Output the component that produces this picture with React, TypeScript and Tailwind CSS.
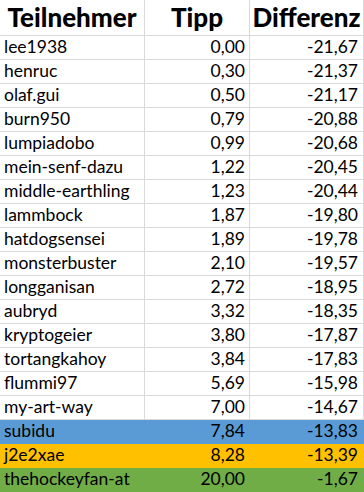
import React from "react";

type Row = { name: string; tipp: string; diff: string; bg?: string };

const rows: Row[] = [
  { name: "lee1938", tipp: "0,00", diff: "-21,67" },
  { name: "henruc", tipp: "0,30", diff: "-21,37" },
  { name: "olaf.gui", tipp: "0,50", diff: "-21,17" },
  { name: "burn950", tipp: "0,79", diff: "-20,88" },
  { name: "lumpiadobo", tipp: "0,99", diff: "-20,68" },
  { name: "mein-senf-dazu", tipp: "1,22", diff: "-20,45" },
  { name: "middle-earthling", tipp: "1,23", diff: "-20,44" },
  { name: "lammbock", tipp: "1,87", diff: "-19,80" },
  { name: "hatdogsensei", tipp: "1,89", diff: "-19,78" },
  { name: "monsterbuster", tipp: "2,10", diff: "-19,57" },
  { name: "longganisan", tipp: "2,72", diff: "-18,95" },
  { name: "aubryd", tipp: "3,32", diff: "-18,35" },
  { name: "kryptogeier", tipp: "3,80", diff: "-17,87" },
  { name: "tortangkahoy", tipp: "3,84", diff: "-17,83" },
  { name: "flummi97", tipp: "5,69", diff: "-15,98" },
  { name: "my-art-way", tipp: "7,00", diff: "-14,67" },
  { name: "subidu", tipp: "7,84", diff: "-13,83", bg: "blue" },
  { name: "j2e2xae", tipp: "8,28", diff: "-13,39", bg: "orange" },
  { name: "thehockeyfan-at", tipp: "20,00", diff: "-1,67", bg: "green" },
];

function cellClasses(bg?: string) {
  if (bg === "blue") return "bg-[#5b9bd5] border-[#5b9bd5]";
  if (bg === "orange") return "bg-[#ffc000] border-[#ffc000]";
  if (bg === "green") return "bg-[#70ad47] border-[#70ad47]";
  return "bg-white border-[#d9d9d9]";
}

export default function App() {
  return (
    <div
      className="w-[364px] h-[492px] bg-white overflow-hidden text-black"
      style={{ fontFamily: "Lato, 'Open Sans', sans-serif" }}
    >
      <div className="grid grid-cols-[145px_105px_114px]">
        <div className="h-[36px] border-r border-b border-[#d9d9d9] flex items-end justify-center pb-[5px] font-black text-[26px] leading-none">
          Teilnehmer
        </div>
        <div className="h-[36px] border-r border-b border-[#d9d9d9] flex items-end justify-center pb-[5px] font-black text-[26px] leading-none">
          Tipp
        </div>
        <div className="h-[36px] border-r border-b border-[#d9d9d9] flex items-end justify-center pb-[5px] font-black text-[26px] leading-none">
          Differenz
        </div>
        {rows.map((r) => {
          const c = cellClasses(r.bg);
          return (
            <React.Fragment key={r.name}>
              <div className={`h-[24px] border-r border-b ${c} flex items-end pl-[4px] pb-[4px] text-[17.5px] leading-none whitespace-nowrap`}>
                {r.name}
              </div>
              <div className={`h-[24px] border-r border-b ${c} flex items-end justify-end pr-[4px] pb-[4px] text-[17.5px] leading-none`}>
                {r.tipp}
              </div>
              <div className={`h-[24px] border-r border-b ${c} flex items-end justify-end pr-[5px] pb-[4px] text-[17.5px] leading-none`}>
                {r.diff}
              </div>
            </React.Fragment>
          );
        })}
      </div>
    </div>
  );
}
